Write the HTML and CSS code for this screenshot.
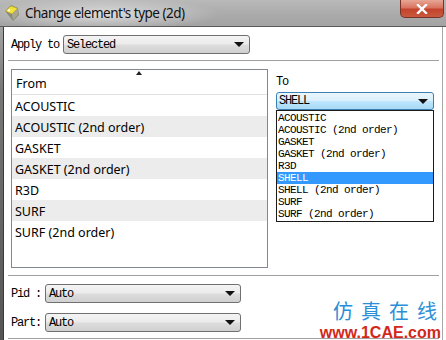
FILE: index.html
```html
<!DOCTYPE html>
<html>
<head>
<meta charset="utf-8">
<link rel="stylesheet" href="styles.css">
</head>
<body>
<div class="window">
  <div class="titlebar">
    <svg class="app-icon" width="18" height="18" viewBox="0 0 18 18">
      <path d="M2 7 L8 1 L15 4 L16 11 L10 17 Z" fill="#8a8a7a"/>
      <path d="M2.5 7 L8 2 L14.5 4.5 L9 10 Z" fill="#f2e23a" stroke="#b8a820" stroke-width="0.6"/>
      <path d="M9 10 L14.5 4.5 L15 10.5 L10 16 Z" fill="#a8a890"/>
      <circle cx="6" cy="6.2" r="1.2" fill="#fffbe0"/>
    </svg>
    <span class="title">Change element's type (2d)</span>
    <div class="close-btn">
      <svg width="12" height="10" viewBox="0 0 12 10"><path d="M2 1 L10 9 M10 1 L2 9" stroke="#fff" stroke-width="2.4" stroke-linecap="square"/></svg>
    </div>
  </div>
  <div class="frame">
    <div class="client">
      <div class="field-row first">
        <span class="lbl">Apply to</span>
        <div class="combo apply"><span>Selected</span><i class="arrow"></i></div>
      </div>
      <div class="sep"></div>
      <div class="mid">
        <div class="listbox">
          <div class="list-head"><span class="sort-arrow"></span>From</div>
          <div class="item">ACOUSTIC</div>
          <div class="item alt">ACOUSTIC (2nd order)</div>
          <div class="item">GASKET</div>
          <div class="item alt">GASKET (2nd order)</div>
          <div class="item">R3D</div>
          <div class="item alt">SURF</div>
          <div class="item">SURF (2nd order)</div>
        </div>
        <div class="to-panel">
          <div class="to-label">To</div>
          <div class="combo-wrap">
            <div class="combo focused"><span>SHELL</span><i class="arrow"></i></div>
            <ul class="dropdown">
              <li>ACOUSTIC</li>
              <li>ACOUSTIC (2nd order)</li>
              <li>GASKET</li>
              <li>GASKET (2nd order)</li>
              <li>R3D</li>
              <li class="sel">SHELL</li>
              <li>SHELL (2nd order)</li>
              <li>SURF</li>
              <li>SURF (2nd order)</li>
            </ul>
          </div>
        </div>
      </div>
      <div class="sep second"></div>
      <div class="field-row pid">
        <span class="lbl short">Pid :</span>
        <div class="combo small"><span>Auto</span><i class="arrow"></i></div>
      </div>
      <div class="field-row part">
        <span class="lbl short">Part:</span>
        <div class="combo small"><span>Auto</span><i class="arrow"></i></div>
      </div>
      <div class="sep last"></div>
    </div>
  </div>
  <div class="watermark">
    <div class="wm-cn">仿真在线</div>
    <div class="wm-url">www.1CAE.com</div>
  </div>
</div>
</body>
</html>
```
FILE: styles.css
```css
html, body {
  margin: 0;
  padding: 0;
  width: 446px;
  height: 340px;
  overflow: hidden;
  background: #ffffff;
}

.window {
  position: relative;
  width: 446px;
  height: 340px;
  display: flex;
  flex-direction: column;
  background: #ffffff;
}

.titlebar {
  height: 27px;
  flex: none;
  display: flex;
  align-items: flex-start;
  background:
    radial-gradient(ellipse 120px 16px at 100px 14px, rgba(225,225,225,0.9), rgba(225,225,225,0) 100%),
    linear-gradient(to bottom, #b9b9b9 0%, #a9a9a9 60%, #a3a3a3 100%);
  border-bottom: 1px solid #5a5a5a;
  box-sizing: border-box;
}

.app-icon {
  margin: 4px 0 0 3px;
  flex: none;
}

.title {
  font-family: "Noto Sans", "Open Sans", sans-serif;
  font-size: 13.5px;
  letter-spacing: -0.5px;
  color: #111;
  margin: 4px 0 0 4px;
  line-height: 18px;
}

.close-btn {
  margin-left: auto;
  margin-right: 2px;
  width: 44px;
  height: 18px;
  box-sizing: border-box;
  border: 1px solid #7a3328;
  border-top: none;
  border-radius: 0 0 5px 5px;
  background: linear-gradient(to bottom, #e8a796 0%, #d9735f 45%, #c4432c 55%, #c85a3f 100%);
  display: flex;
  align-items: center;
  justify-content: center;
}

.frame {
  flex: 1;
  display: flex;
  background: #ffffff;
}

.frame::before {
  content: "";
  width: 3px;
  flex: none;
  background: linear-gradient(to bottom, #a3a3a3 0%, #777 20%, #555 100%);
  border-right: 1px solid #3a3a3a;
}

.client {
  width: 439px;
  border-right: 1px solid #a8a8a8;
  display: flex;
  flex-direction: column;
  padding-top: 8px;
  box-sizing: border-box;
  flex: none;
}

.field-row {
  display: flex;
  align-items: center;
  padding-left: 7px;
  height: 19px;
}

.lbl {
  font-family: "Liberation Mono", "DejaVu Sans Mono", monospace;
  font-size: 12px;
  letter-spacing: -1.2px;
  color: #000;
  width: 52px;
}

.lbl.short {
  width: 34px;
}

.combo {
  position: relative;
  height: 19px;
  box-sizing: border-box;
  border: 1px solid #707070;
  border-radius: 3px;
  background: linear-gradient(to bottom, #f4f4f4 0%, #ebebeb 48%, #dddddd 52%, #d0d0d0 100%);
  display: flex;
  align-items: center;
  padding-left: 3px;
  font-family: "Liberation Mono", "DejaVu Sans Mono", monospace;
  font-size: 12px;
  letter-spacing: -1.2px;
  color: #000;
}

.combo.apply {
  width: 187px;
}

.combo.small {
  width: 196px;
}

.arrow {
  position: absolute;
  right: 5px;
  top: 6px;
  width: 0;
  height: 0;
  border-left: 5px solid transparent;
  border-right: 5px solid transparent;
  border-top: 5px solid #111;
}

.sep {
  height: 1px;
  background: #a0a0a0;
  margin: 6px 3px 0 4px;
}

.sep.second {
  margin-top: 7px;
}

.sep.last {
  margin-top: 6px;
}

.mid {
  display: flex;
  padding-left: 7px;
  margin-top: 8px;
  gap: 8px;
}

.listbox {
  width: 257px;
  height: 199px;
  box-sizing: border-box;
  border: 1px solid #828790;
  font-family: "Noto Sans", "Open Sans", sans-serif;
  font-size: 12.5px;
  color: #000;
}

.list-head {
  position: relative;
  height: 25px;
  box-sizing: border-box;
  border-bottom: 1px solid #e2e2e2;
  padding: 6px 0 0 4px;
  line-height: 16px;
  font-size: 12.5px;
  background: #ffffff;
}

.sort-arrow {
  position: absolute;
  left: 124px;
  top: 1px;
  width: 0;
  height: 0;
  border-left: 3.5px solid transparent;
  border-right: 3.5px solid transparent;
  border-bottom: 4px solid #222;
}

.item {
  height: 21px;
  line-height: 23px;
  padding-left: 3px;
}

.item.alt {
  background: #ececec;
}

.to-panel {
  display: flex;
  flex-direction: column;
  width: 158px;
}

.to-label {
  font-family: "Liberation Mono", "DejaVu Sans Mono", monospace;
  font-size: 12px;
  letter-spacing: -1.2px;
  line-height: 14px;
  margin-top: 6px;
  height: 17px;
}

.combo-wrap {
  position: relative;
}

.combo.focused {
  height: 18px;
  width: 158px;
  border-color: #3c7fb1;
  background: linear-gradient(to bottom, #eaf6fd 0%, #d9f0fc 48%, #bee6fd 52%, #a7d9f5 100%);
  padding-left: 2px;
}

.dropdown {
  position: absolute;
  left: 0;
  top: 18px;
  width: 158px;
  margin: 0;
  padding: 1px 0;
  box-sizing: border-box;
  list-style: none;
  border: 1px solid #1a1a1a;
  background: #ffffff;
  font-family: "Liberation Mono", "DejaVu Sans Mono", monospace;
  font-size: 11px;
  letter-spacing: -0.6px;
}

.dropdown li {
  height: 12px;
  line-height: 12px;
  padding-left: 1px;
  color: #000;
}

.dropdown li.sel {
  background: #3399ff;
  color: #fff;
}

.field-row.pid {
  margin-top: 8px;
}

.field-row.part {
  margin-top: 10px;
}

.watermark {
  position: absolute;
  right: 5px;
  bottom: 0;
  width: 130px;
  display: flex;
  flex-direction: column;
  align-items: flex-end;
}

.wm-cn {
  font-family: "Noto Sans CJK SC", sans-serif;
  font-size: 20px;
  line-height: 22px;
  letter-spacing: 8px;
  color: #2a8fd8;
  margin-right: -4px;
  margin-bottom: 4px;
}

.wm-url {
  font-family: "Liberation Sans", Arial, sans-serif;
  font-weight: bold;
  font-size: 16px;
  line-height: 14px;
  color: #d2281a;
}
```
